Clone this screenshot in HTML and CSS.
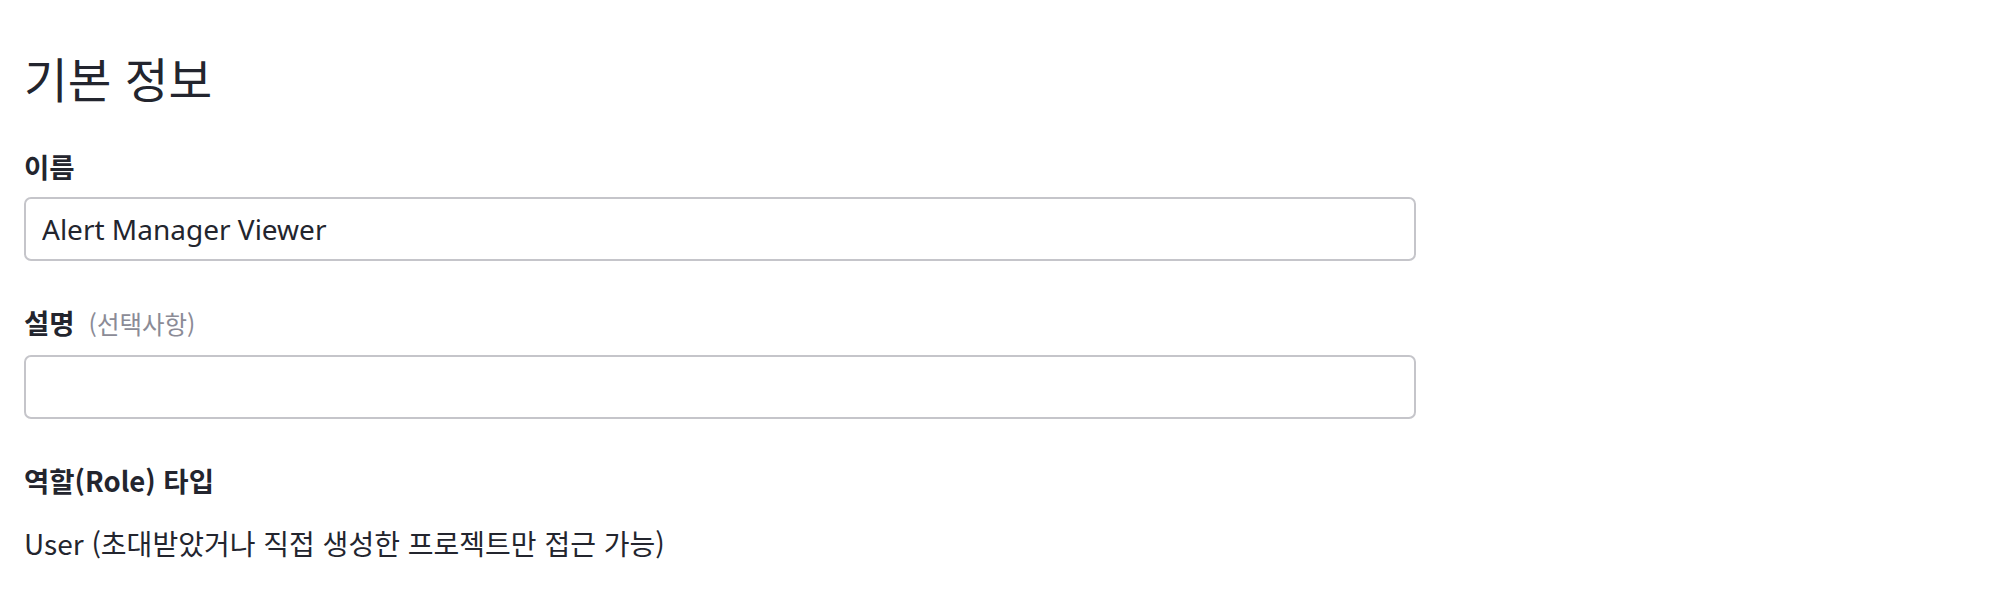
FILE: index.html
```html
<!DOCTYPE html>
<html lang="ko">
<head>
<meta charset="utf-8">
<link rel="stylesheet" href="styles.css">
</head>
<body>
<section class="form">
  <h2 class="title">기본 정보</h2>
  <div class="field">
    <label class="label">이름</label>
    <input class="input" type="text" value="Alert Manager Viewer">
  </div>
  <div class="field">
    <label class="label">설명<span class="optional">(선택사항)</span></label>
    <input class="input" type="text" value="">
  </div>
  <div class="field">
    <div class="label label-static">역할(Role) 타입</div>
    <div class="value">User (초대받았거나 직접 생성한 프로젝트만 접근 가능)</div>
  </div>
</section>
</body>
</html>
```
FILE: styles.css
```css
html, body {
  margin: 0;
  padding: 0;
  background: #ffffff;
}
body {
  font-family: "Noto Sans CJK KR", "Noto Sans", sans-serif;
  color: #23252e;
}
.form {
  width: 1392px;
  padding: 46px 0 0 24px;
  display: flex;
  flex-direction: column;
}
.title {
  margin: 0 0 38px 0;
  font-size: 47.5px;
  font-weight: 400;
  line-height: 64px;
}
.field {
  display: flex;
  flex-direction: column;
  margin-bottom: 43px;
}
.label {
  font-size: 27.5px;
  font-weight: 700;
  line-height: 36px;
  margin-bottom: 13px;
}
.label-static {
  margin-bottom: 27px;
}
.optional {
  font-size: 24.5px;
  font-weight: 400;
  color: #8b8b96;
  margin-left: 14px;
}
.input {
  box-sizing: border-box;
  width: 1392px;
  height: 64px;
  border: 2px solid #c5c5ca;
  border-radius: 7px;
  padding: 0 16px;
  font-family: "Noto Sans", sans-serif;
  font-size: 28px;
  color: #23252e;
  background: #fff;
  outline: none;
}
.value {
  font-size: 28px;
  line-height: 36px;
}
```
